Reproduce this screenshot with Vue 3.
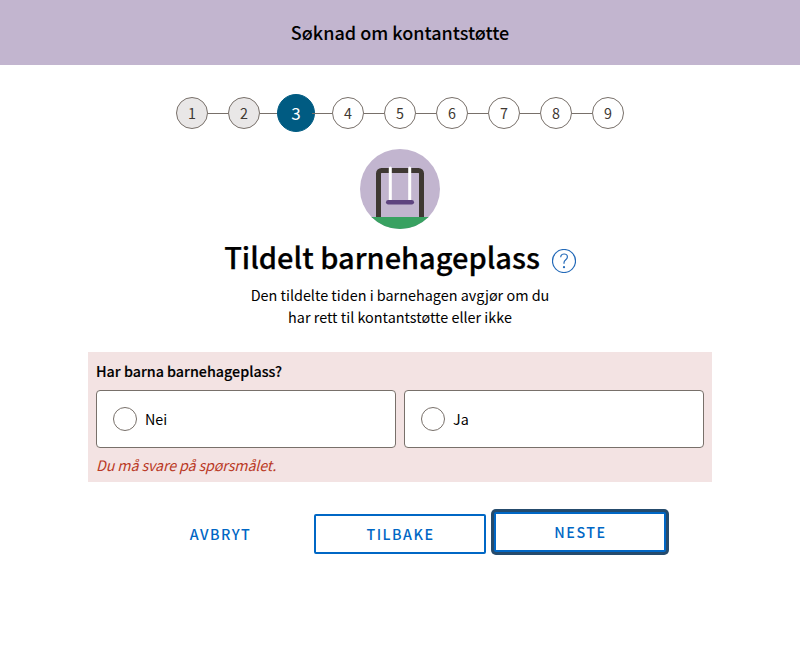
<script setup>
const steps = [1, 2, 3, 4, 5, 6, 7, 8, 9]
const current = 3
const options = ['Nei', 'Ja']
</script>

<template>
  <div class="page">
    <header class="banner"><span>Søknad om kontantstøtte</span></header>

    <ol class="stepper">
      <li v-for="n in steps" :key="n" class="step-item">
        <span class="step" :class="{ done: n < current, active: n === current }">{{ n }}</span>
      </li>
    </ol>

    <svg class="emblem" viewBox="0 0 80 80">
      <defs>
        <clipPath id="disc"><circle cx="40" cy="40" r="40" /></clipPath>
      </defs>
      <g clip-path="url(#disc)">
        <rect width="80" height="80" fill="#c2b5cf" />
        <path d="M18.5 69V24.5a3 3 0 0 1 3-3h37a3 3 0 0 1 3 3V69" fill="none" stroke="#3e3832" stroke-width="5" />
        <path d="M30.3 19v33M49.7 19v33" fill="none" stroke="#fff" stroke-width="3" stroke-linecap="round" />
        <path d="M28.2 53.3h23.6" stroke="#5e437f" stroke-width="4.4" stroke-linecap="round" />
        <rect y="68" width="80" height="12" fill="#38a161" />
      </g>
    </svg>

    <div class="heading">
      <h1>Tildelt barnehageplass</h1>
      <svg class="help" viewBox="0 0 24 24">
        <circle cx="12" cy="12" r="11.5" />
        <path d="M8.7 8.2C8.8 6.1 10.1 5 12.1 5c2 0 3.3 1.2 3.3 3 0 1.6-.9 2.3-1.9 3.1-1.1.8-1.5 1.4-1.5 2.6v1.1" />
        <circle class="dot" cx="12" cy="18.2" r="1.1" />
      </svg>
    </div>

    <p class="intro">
      Den tildelte tiden i barnehagen avgjør om du<br />
      har rett til kontantstøtte eller ikke
    </p>

    <section class="panel">
      <div class="question">Har barna barnehageplass?</div>
      <div class="options">
        <div v-for="o in options" :key="o" class="option">
          <span class="radio"></span><span>{{ o }}</span>
        </div>
      </div>
      <div class="error">Du må svare på spørsmålet.</div>
    </section>

    <div class="actions">
      <button class="btn flat">AVBRYT</button>
      <button class="btn">TILBAKE</button>
      <button class="btn focused">NESTE</button>
    </div>
  </div>
</template>

<style>
body {
  background: #fff;
}
</style>

<style scoped>
.page {
  display: flex;
  flex-direction: column;
  align-items: center;
  height: 650px;
  font-family: "Noto Sans CJK SC", "Noto Sans", sans-serif;
  font-size: 14.3px;
  line-height: 22px;
  color: #000;
}
.banner {
  box-sizing: border-box;
  width: 100%;
  height: 65px;
  padding-bottom: 2px;
  background: #c2b5cf;
  display: flex;
  align-items: center;
  justify-content: center;
  font-size: 18px;
  font-weight: 500;
}
.stepper {
  display: flex;
  align-items: center;
  height: 38px;
  margin: 29px 0 0;
  padding: 0;
  list-style: none;
  color: #3e3832;
}
.step-item {
  display: flex;
  align-items: center;
  justify-content: center;
  width: 32px;
}
.step-item + .step-item {
  width: 52px;
  justify-content: flex-end;
}
.step-item + .step-item::before {
  content: "";
  flex: 1;
  height: 1px;
  background: #78706a;
}
.step {
  flex: none;
  box-sizing: border-box;
  width: 32px;
  height: 32px;
  border: 1px solid #78706a;
  border-radius: 50%;
  background: #fff;
  display: flex;
  align-items: center;
  justify-content: center;
}
.step.done {
  background: #e9e7e7;
}
.step.active {
  width: 38px;
  height: 38px;
  margin: 0 -3px;
  border-color: #005b82;
  background: #005b82;
  color: #fff;
  font-size: 17px;
}
.emblem {
  width: 80px;
  height: 80px;
  margin-top: 17px;
}
.heading {
  display: flex;
  align-items: center;
  gap: 12px;
  height: 40px;
  margin-top: 10px;
}
h1 {
  margin: 0;
  padding-bottom: 6px;
  font-size: 29px;
  line-height: 40px;
  font-weight: 500;
  -webkit-text-stroke: 0.25px #000;
}
.help {
  width: 24px;
  height: 24px;
  margin-top: 4px;
  fill: none;
  stroke: #2269b8;
  stroke-width: 1.2;
}
.dot {
  fill: #2269b8;
  stroke: none;
}
.intro {
  margin: 5px 0 0;
  font-size: 14.4px;
  text-align: center;
}
.panel {
  box-sizing: border-box;
  width: 624px;
  height: 130px;
  margin-top: 24px;
  padding: 8px;
  background: #f3e3e3;
}
.question {
  height: 22px;
  font-weight: 500;
  -webkit-text-stroke: 0.15px #000;
}
.options {
  display: flex;
  gap: 8px;
  margin-top: 8px;
}
.option {
  box-sizing: border-box;
  flex: 1;
  height: 58px;
  padding: 0 16px;
  border: 1px solid #78706a;
  border-radius: 4px;
  background: #fff;
  display: flex;
  align-items: center;
  gap: 8px;
}
.radio {
  box-sizing: border-box;
  width: 24px;
  height: 24px;
  border: 1px solid #78706a;
  border-radius: 50%;
}
.error {
  margin-top: 6px;
  font-style: italic;
  letter-spacing: -0.13px;
  color: #ba3a26;
}
.actions {
  display: flex;
  gap: 8px;
  margin-top: 32px;
}
.btn {
  box-sizing: border-box;
  width: 172px;
  height: 40px;
  padding: 0 0 0 1px;
  border: 2px solid #0067c5;
  border-radius: 2px;
  background: #fff;
  color: #0067c5;
  font: inherit;
  font-weight: 500;
  letter-spacing: 1.5px;
}
.flat {
  border-color: transparent;
}
.focused {
  transform: translateY(-2px);
  box-shadow: 0 0 0 3px #254b6d;
}
</style>
